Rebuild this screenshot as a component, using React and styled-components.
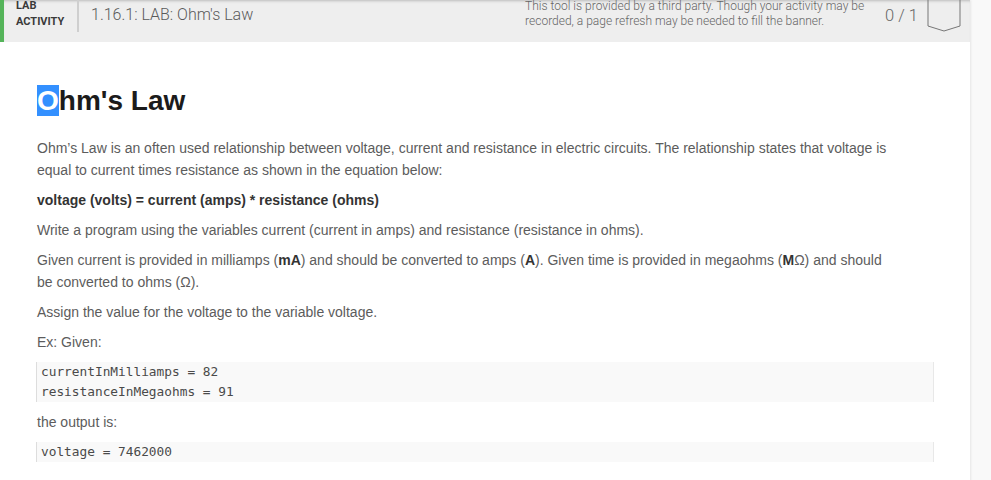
import React from 'react';
import styled, { createGlobalStyle } from 'styled-components';

const GlobalStyle = createGlobalStyle`
    html, body {
        margin: 0;
        padding: 0;
        background: #f9f9f9;
        overflow: hidden;
    }
`;

const Page = styled.div`
    width: 970px;
    min-height: 480px;
    background: #ffffff;
    box-shadow: 1px 0 2px rgba(0, 0, 0, 0.08);
`;

const Header = styled.header`
    display: flex;
    align-items: flex-start;
    height: 42px;
    box-sizing: border-box;
    background: #eeeeee;
    border-left: 4px solid #55b45a;
    box-shadow: inset 0 3px 3px -2px rgba(0, 0, 0, 0.22);
    padding-right: 9px;
    font-family: Roboto, "Liberation Sans", sans-serif;
`;

const LabLabel = styled.div`
    width: 61px;
    padding-left: 12px;
    margin-top: -2px;
    font-size: 11px;
    font-weight: 700;
    line-height: 16px;
    color: #3a3a3a;
`;

const Divider = styled.div`
    width: 2px;
    height: 32px;
    background: #cfcfcf;
`;

const Title = styled.div`
    flex: 1;
    margin-left: 12px;
    font-size: 16px;
    font-weight: 300;
    line-height: 30px;
    color: #5a5a5a;
`;

const Notice = styled.div`
    width: 340px;
    margin-top: -1px;
    font-size: 12px;
    line-height: 15px;
    font-weight: 300;
    color: #666666;
`;

const Count = styled.div`
    margin-left: 20px;
    font-size: 16.5px;
    font-weight: 300;
    line-height: 32px;
    color: #666666;
`;

const Banner = styled.svg`
    display: block;
    margin-left: 9px;
    width: 34px;
    height: 33px;
`;

const Content = styled.main`
    padding: 42px 36px 20px 37px;
    font-family: "Liberation Sans", Arial, sans-serif;
`;

const Heading = styled.h1`
    margin: 0 0 20px;
    font-size: 28px;
    line-height: 33px;
    font-weight: 700;
    color: #1b1b1b;
`;

const Selected = styled.span`
    background: #3390ff;
    color: #ffffff;
`;

const Para = styled.p`
    max-width: 856px;
    margin: 0 0 8px;
    font-size: 14px;
    line-height: 22px;
    color: #5c5c5c;
    b {
        color: #333333;
    }
`;

const Code = styled.pre`
    margin: 9px 0 9px -1px;
    padding: 0 4px;
    background: #f9f9f9;
    border-left: 1px solid #dddddd;
    border-right: 1px solid #e8e8e8;
    font-family: "DejaVu Sans Mono", "Liberation Mono", monospace;
    font-size: 12.8px;
    line-height: 20px;
    color: #4a4a4a;
`;

export default function App() {
    return (
        <>
            <GlobalStyle />
            <Page>
                <Header>
                    <LabLabel>LAB<br />ACTIVITY</LabLabel>
                    <Divider />
                    <Title>1.16.1: LAB: Ohm's Law</Title>
                    <Notice>
                        This tool is provided by a third party. Though your activity may be recorded, a page refresh may be needed to fill the banner.
                    </Notice>
                    <Count>0 / 1</Count>
                    <Banner viewBox="0 0 34 33">
                        <path d="M1 -2 V26 L17 31 L33 26 V-2" fill="none" stroke="#777" strokeWidth="1" />
                    </Banner>
                </Header>
                <Content>
                    <Heading><Selected>O</Selected>hm's Law</Heading>
                    <Para>
                        Ohm’s Law is an often used relationship between voltage, current and resistance in electric circuits. The relationship states that voltage is equal to current times resistance as shown in the equation below:
                    </Para>
                    <Para><b>voltage (volts) = current (amps) * resistance (ohms)</b></Para>
                    <Para>Write a program using the variables current (current in amps) and resistance (resistance in ohms).</Para>
                    <Para>
                        Given current is provided in milliamps (<b>mA</b>) and should be converted to amps (<b>A</b>). Given time is provided in megaohms (<b>M</b>Ω) and should be converted to ohms (Ω).
                    </Para>
                    <Para>Assign the value for the voltage to the variable voltage.</Para>
                    <Para>Ex: Given:</Para>
                    <Code>{`currentInMilliamps = 82
resistanceInMegaohms = 91`}</Code>
                    <Para>the output is:</Para>
                    <Code>voltage = 7462000</Code>
                </Content>
            </Page>
        </>
    );
}
